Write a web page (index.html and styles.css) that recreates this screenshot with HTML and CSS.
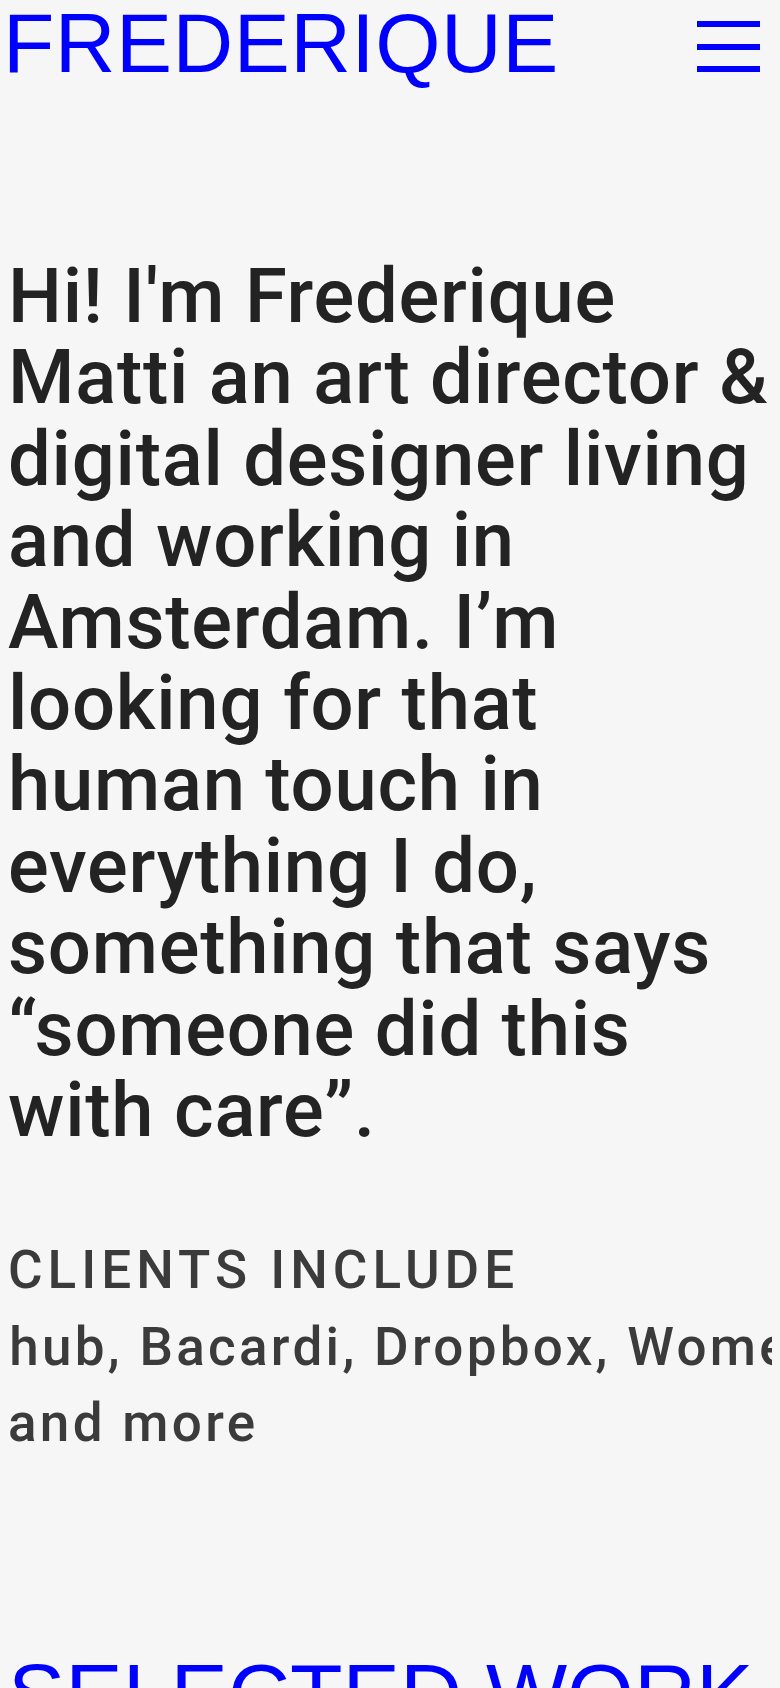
FILE: index.html
```html
<!DOCTYPE html>
<html lang="en">
<head>
    <meta charset="UTF-8">
    <meta name="viewport" content="width=device-width, initial-scale=1.0">
    <title>Frederique Matti</title>
    <link rel="stylesheet" href="styles.css">
</head>
<body>
    <header class="site-header">
        <a class="logo" href="#">FREDERIQUE</a>
        <button class="menu-btn" aria-label="Menu">
            <span></span>
            <span></span>
            <span></span>
        </button>
    </header>

    <main>
        <p class="intro">Hi! I'm Frederique Matti an art director &amp; digital designer living and working in Amsterdam. I’m looking for that human touch in everything I do, something that says “someone did this with care”.</p>

        <section class="clients">
            <h3 class="clients-title">CLIENTS INCLUDE</h3>
            <div class="marquee">
                <div class="marquee-track">Github, Bacardi, Dropbox, Women’s Health, Nike, Spotify, Heineken, Github, Bacardi</div>
            </div>
            <div class="clients-more">and more</div>
        </section>

        <h2 class="section-title">SELECTED WORK</h2>
    </main>
</body>
</html>
```

FILE: styles.css
```css
body {
    margin: 0;
    padding: 0 8px;
    background: #f6f6f6;
    color: #232323;
    font-family: Roboto, "Liberation Sans", sans-serif;
    overflow: hidden;
}

.site-header {
    display: flex;
    justify-content: space-between;
    align-items: flex-start;
    margin: 0 12px 0 -5px; /* logo sits tight to the edge */
}

.logo {
    font-family: "Liberation Sans", Arial, sans-serif;
    font-size: 84px;
    line-height: 86px;
    letter-spacing: 0.5px;
    color: #0000ff;
    text-decoration: none;
}

.menu-btn {
    display: flex;
    flex-direction: column;
    gap: 16.5px;
    width: 63px;
    padding: 21px 0 0;
    border: none;
    background: none;
    cursor: pointer;
}

.menu-btn span {
    display: block;
    height: 6px;
    background: #0000ff;
}

.intro {
    margin: 170px 0 0;
    font-size: 76px;
    font-weight: 500;
    line-height: 81.4px;
    letter-spacing: 0.75px;
}

.clients {
    margin-top: 81px;
    color: #3b3b3b;
    font-size: 53px;
    font-weight: 500;
    line-height: 76.5px;
    letter-spacing: 3.3px;
}

.clients-title {
    margin: 0;
    font-size: inherit;
    font-weight: inherit;
    letter-spacing: 5px;
}

.marquee {
    overflow: hidden;
    white-space: nowrap;
}

.marquee-track {
    transform: translateX(-76px);
}

.section-title {
    margin: 190px 0 0;
    font-family: "Liberation Sans", Arial, sans-serif;
    font-size: 86px;
    line-height: 84px;
    font-weight: normal;
    color: #0000ff;
}
```
